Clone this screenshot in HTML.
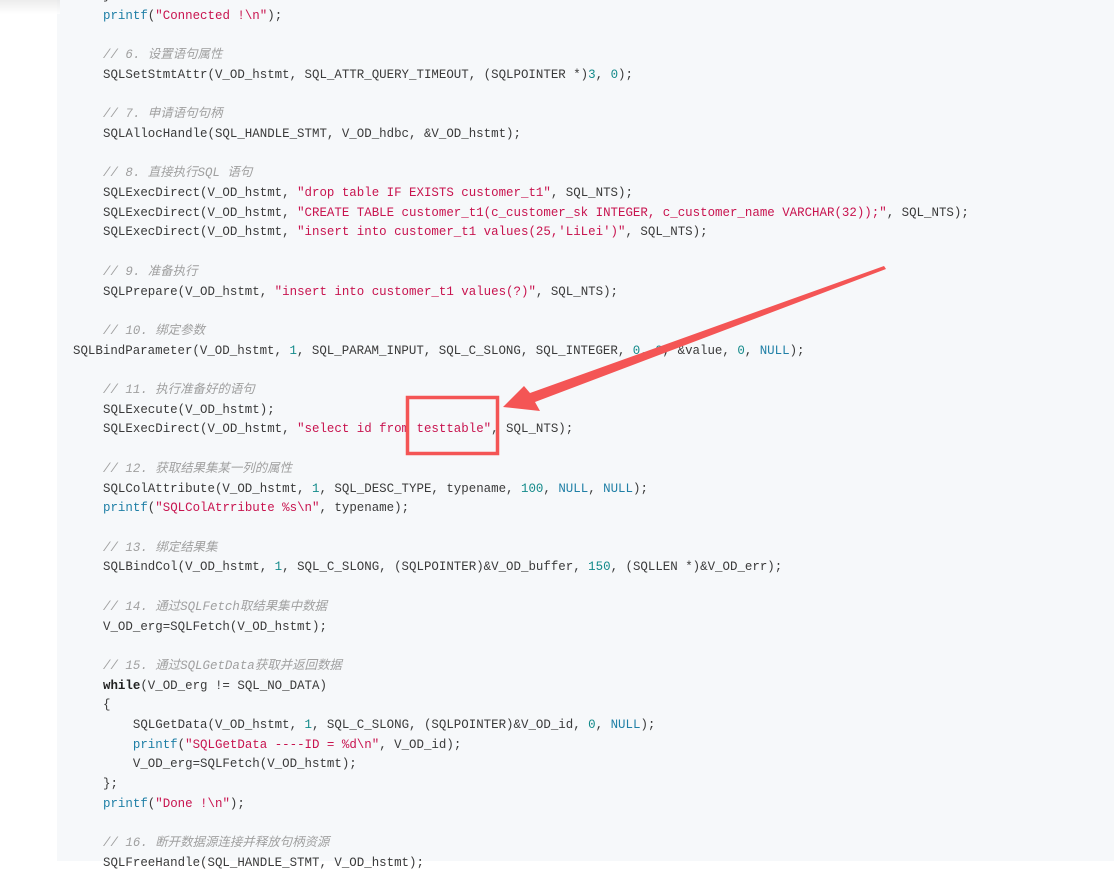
<!DOCTYPE html>
<html><head><meta charset="utf-8"><style>
html,body{margin:0;padding:0;width:1114px;height:861px;overflow:hidden;background:#fff}
.blk{position:absolute;left:57px;top:0;width:1057px;height:861px;background:#f6f8fa}
.sh{position:absolute;left:0;top:0;width:60px;height:14px;background:linear-gradient(#e4e4e4,#fff);opacity:.7}
pre{position:absolute;left:103px;top:-13px;margin:0;font-family:"Liberation Mono","Noto Sans CJK SC",monospace;font-size:12.45px;line-height:19.7px;color:#3a3a3a;white-space:pre}
.s{color:#c8144f}.f{color:#1f7fa6}.n{color:#138a8a}.c{color:#a0a0a0;font-style:italic}.k{font-weight:bold;color:#222}
.o{position:relative;left:-30px}
svg{position:absolute;left:0;top:0}
</style></head><body>
<div class="blk"></div><div class="sh"></div>
<pre>}
<span class="f">printf</span>(<span class="s">"Connected !\n"</span>);

<span class="c">// 6. 设置语句属性</span>
SQLSetStmtAttr(V_OD_hstmt, SQL_ATTR_QUERY_TIMEOUT, (SQLPOINTER *)<span class="n">3</span>, <span class="n">0</span>);

<span class="c">// 7. 申请语句句柄</span>
SQLAllocHandle(SQL_HANDLE_STMT, V_OD_hdbc, &amp;V_OD_hstmt);

<span class="c">// 8. 直接执行SQL 语句</span>
SQLExecDirect(V_OD_hstmt, <span class="s">"drop table IF EXISTS customer_t1"</span>, SQL_NTS);
SQLExecDirect(V_OD_hstmt, <span class="s">"CREATE TABLE customer_t1(c_customer_sk INTEGER, c_customer_name VARCHAR(32));"</span>, SQL_NTS);
SQLExecDirect(V_OD_hstmt, <span class="s">"insert into customer_t1 values(25,'LiLei')"</span>, SQL_NTS);

<span class="c">// 9. 准备执行</span>
SQLPrepare(V_OD_hstmt, <span class="s">"insert into customer_t1 values(?)"</span>, SQL_NTS);

<span class="c">// 10. 绑定参数</span>
<span class="o">SQLBindParameter(V_OD_hstmt, <span class="n">1</span>, SQL_PARAM_INPUT, SQL_C_SLONG, SQL_INTEGER, <span class="n">0</span>, <span class="n">0</span>, &amp;value, <span class="n">0</span>, <span class="f">NULL</span>);</span>

<span class="c">// 11. 执行准备好的语句</span>
SQLExecute(V_OD_hstmt);
SQLExecDirect(V_OD_hstmt, <span class="s">"select id from testtable"</span>, SQL_NTS);

<span class="c">// 12. 获取结果集某一列的属性</span>
SQLColAttribute(V_OD_hstmt, <span class="n">1</span>, SQL_DESC_TYPE, typename, <span class="n">100</span>, <span class="f">NULL</span>, <span class="f">NULL</span>);
<span class="f">printf</span>(<span class="s">"SQLColAtrribute %s\n"</span>, typename);

<span class="c">// 13. 绑定结果集</span>
SQLBindCol(V_OD_hstmt, <span class="n">1</span>, SQL_C_SLONG, (SQLPOINTER)&amp;V_OD_buffer, <span class="n">150</span>, (SQLLEN *)&amp;V_OD_err);

<span class="c">// 14. 通过SQLFetch取结果集中数据</span>
V_OD_erg=SQLFetch(V_OD_hstmt);

<span class="c">// 15. 通过SQLGetData获取并返回数据</span>
<span class="k">while</span>(V_OD_erg != SQL_NO_DATA)
{
    SQLGetData(V_OD_hstmt, <span class="n">1</span>, SQL_C_SLONG, (SQLPOINTER)&amp;V_OD_id, <span class="n">0</span>, <span class="f">NULL</span>);
    <span class="f">printf</span>(<span class="s">"SQLGetData ----ID = %d\n"</span>, V_OD_id);
    V_OD_erg=SQLFetch(V_OD_hstmt);
};
<span class="f">printf</span>(<span class="s">"Done !\n"</span>);

<span class="c">// 16. 断开数据源连接并释放句柄资源</span>
SQLFreeHandle(SQL_HANDLE_STMT, V_OD_hstmt);
</pre>
<svg width="1114" height="861">
<rect x="407.5" y="397.5" width="90" height="56" fill="none" stroke="#f45555" stroke-width="3.5"/>
<polygon points="884,266 886,269 535,402 540,411 503,407 524,386 530,393" fill="#f45555"/>
</svg>
</body></html>
